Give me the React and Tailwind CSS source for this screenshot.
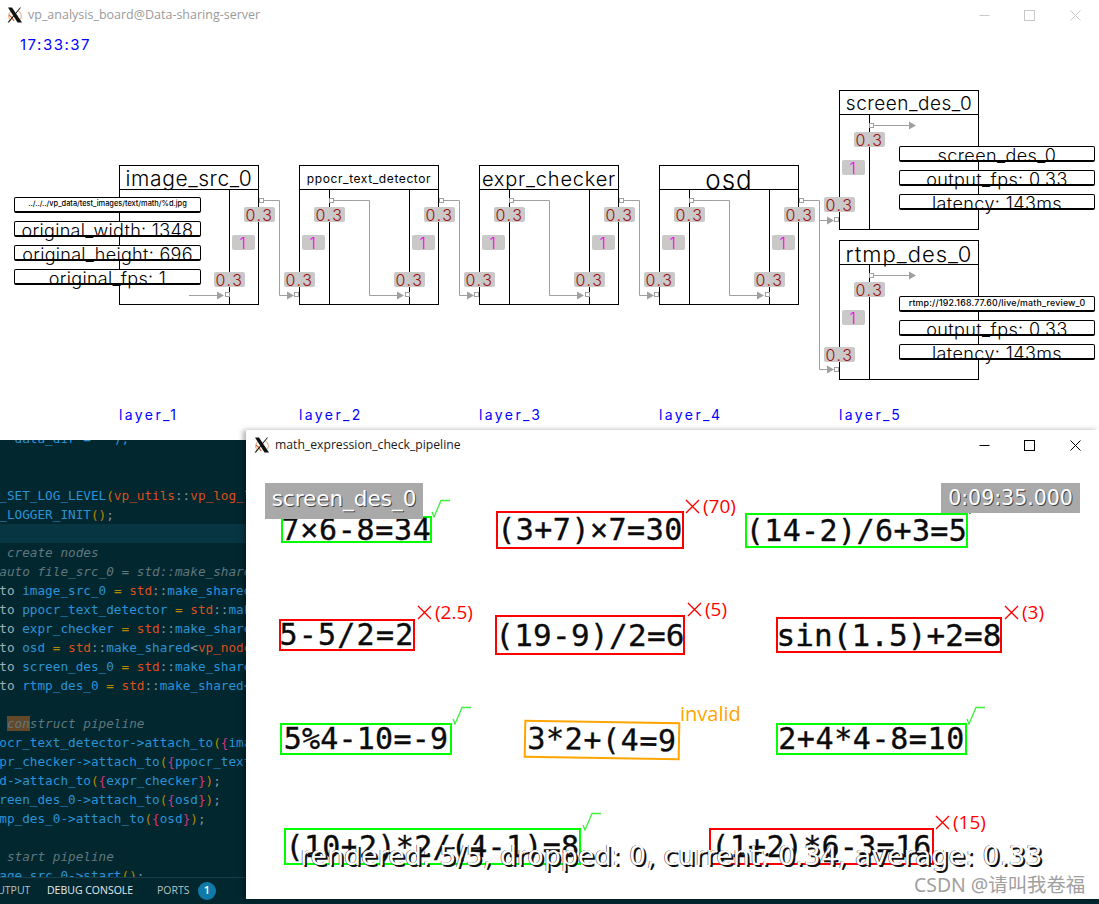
const hershey = "font-['Inter',sans-serif] font-light text-black whitespace-nowrap"
const mono = "font-['DejaVu_Sans_Mono',monospace]"
const dejavu = "font-['DejaVu_Sans',sans-serif]"
const ui = "font-['Open_Sans',sans-serif]"

function XLogo({ className }) {
  return (
    <svg className={className} viewBox="0 0 16 16" aria-hidden="true">
      <path d="M5 3.5 C1 6 0.5 11 4 13.5" fill="none" stroke="#e8a070" strokeWidth="1" />
      <path d="M11 3.5 C15 6 15.5 11 12 13.5" fill="none" stroke="#e8a070" strokeWidth="1" />
      <path d="M2 8 C5 10 6 11 7 14" fill="none" stroke="#e06020" strokeWidth="1.2" />
      <path d="M1 0.5 H5 L15 15.5 H10.5 Z" fill="#111" />
      <path d="M14 0.5 L2 15.5 H0.5 L13 0.5 Z" fill="#111" />
    </svg>
  )
}

function WindowControls({ className }) {
  return (
    <div className={`flex items-center ${className}`}>
      <svg className="w-[11px] h-[11px] mr-[34px]" viewBox="0 0 11 11" aria-hidden="true">
        <path d="M0.5 5.5 H10.5" stroke="currentColor" fill="none" />
      </svg>
      <svg className="w-[11px] h-[11px] mr-[35px]" viewBox="0 0 11 11" aria-hidden="true">
        <rect x="0.5" y="0.5" width="10" height="10" stroke="currentColor" fill="none" />
      </svg>
      <svg className="w-[11px] h-[11px]" viewBox="0 0 11 11" aria-hidden="true">
        <path d="M0.5 0.5 L10.5 10.5 M10.5 0.5 L0.5 10.5" stroke="currentColor" fill="none" />
      </svg>
    </div>
  )
}

function Chip({ className, value }) {
  const isRate = value === '1'
  return (
    <span
      className={`absolute h-[15px] flex items-center justify-center rounded-[2px] bg-[#cbc8c8] text-[16px] leading-none whitespace-nowrap font-['Inter',sans-serif] font-light tracking-[1.5px] ${
        isRate ? 'w-[23px] text-[#f000f0]' : 'w-[31px] text-[#9c1010]'
      } ${className}`}
    >
      {value}
    </span>
  )
}

function Port({ className }) {
  return <span className={`absolute w-[5px] h-[5px] border border-[#a0a0a0] bg-white ${className}`} />
}

// wires are drawn relative to the node's top-left corner
function Wires({ d, arrows }) {
  return (
    <svg className="absolute left-0 top-0 overflow-visible" width="140" height="140" aria-hidden="true">
      <path d={d} fill="none" stroke="#a0a0a0" />
      {arrows.map(([x, y]) => (
        <polygon key={`${x}-${y}`} points={`${x},${y - 4} ${x + 7},${y} ${x},${y + 4}`} fill="#a0a0a0" />
      ))}
    </svg>
  )
}

function InfoBoxes({ className, items }) {
  return (
    <div className={`absolute flex flex-col gap-2 ${className}`}>
      {items.map((item) => (
        <div
          key={item.text}
          className="h-4 rounded-[2px] border border-black border-b-2 bg-white flex items-end justify-center"
        >
          <span className={`${hershey} ${item.cls}`}>{item.text}</span>
        </div>
      ))}
    </div>
  )
}

function PipeNode({ className, title, titleCls, kind, wires, arrows, children }) {
  const hasLeft = kind !== 'src'
  const hasRight = kind !== 'des'
  return (
    <div className={`absolute w-[140px] h-[140px] ${className}`}>
      <div className="w-full h-full border border-black flex flex-col">
        <div className="h-[24px] pt-[3px] border-b border-black flex items-center justify-center shrink-0">
          <span className={`${hershey} ${titleCls}`}>{title}</span>
        </div>
        <div className="flex flex-1">
          {hasLeft && <div className="w-[30px] border-r border-black" />}
          <div className="flex-1" />
          {hasRight && <div className="w-[29px] border-l border-black" />}
        </div>
      </div>
      <Wires d={wires} arrows={arrows} />
      {hasLeft && (
        <>
          <Port className="left-[-5px] top-[127px]" />
          <Port className="left-[30px] top-[33px]" />
          <Chip className="left-[-15px] top-[107px]" value="0.3" />
          <Chip className="left-[3px] top-[70px]" value="1" />
          <Chip className="left-[15px] top-[42px]" value="0.3" />
        </>
      )}
      {hasRight && (
        <>
          <Port className="left-[106px] top-[127px]" />
          <Port className="left-[140px] top-[33px]" />
          <Chip className="left-[95px] top-[107px]" value="0.3" />
          <Chip className="left-[113px] top-[70px]" value="1" />
          <Chip className="left-[125px] top-[42px]" value="0.3" />
        </>
      )}
      {children}
    </div>
  )
}

const NEXT = 'M145 35.5 H160.5 V130.5 H168'
const THROUGH = 'M35 35.5 H70.5 V130.5 H99'

function BoardWindow() {
  return (
    <div className="h-[440px] bg-white flex flex-col">
      <div className="h-[30px] shrink-0 flex items-center pl-[7px] pr-[18px]">
        <XLogo className="w-4 h-4" />
        <span className={`ml-[5px] text-[12.5px] text-[#9a9a9a] ${ui}`}>vp_analysis_board@Data-sharing-server</span>
        <WindowControls className="ml-auto text-[#c8c8c8]" />
      </div>
      <div className="relative flex-1">
        <div className="pl-5 pt-[7px] text-[15px] leading-4 text-[#0000ff] tracking-[1.5px] font-['Inter',sans-serif] font-normal">
          17:33:37
        </div>

        <PipeNode
          className="left-[119px] top-[135px]"
          kind="src"
          title="image_src_0"
          titleCls="text-[21px] tracking-[0.6px]"
          wires={`M70 130.5 H99 ${NEXT}`}
          arrows={[[98, 130.5], [168, 130.5]]}
        >
          <InfoBoxes
            className="left-[-105px] top-[32px] w-[187px]"
            items={[
              { text: '../../../vp_data/test_images/text/math/%d.jpg', cls: 'text-[7.4px] font-medium mb-[2px]' },
              { text: 'original_width: 1348', cls: 'text-[18px] leading-[18px] tracking-[0.3px] -mb-[5px]' },
              { text: 'original_height: 696', cls: 'text-[18px] leading-[18px] tracking-[0.3px] -mb-[5px]' },
              { text: 'original_fps: 1', cls: 'text-[18px] leading-[18px] tracking-[0.3px] -mb-[5px]' },
            ]}
          />
        </PipeNode>
        <PipeNode
          className="left-[299px] top-[135px]"
          kind="mid"
          title="ppocr_text_detector"
          titleCls="text-[12px] font-normal tracking-[0.6px]"
          wires={`${THROUGH} ${NEXT}`}
          arrows={[[98, 130.5], [168, 130.5]]}
        />
        <PipeNode
          className="left-[479px] top-[135px]"
          kind="mid"
          title="expr_checker"
          titleCls="text-[20px] tracking-[0.8px]"
          wires={`${THROUGH} ${NEXT}`}
          arrows={[[98, 130.5], [168, 130.5]]}
        />
        <PipeNode
          className="left-[659px] top-[135px]"
          kind="mid"
          title="osd"
          titleCls="text-[26px] tracking-[1px]"
          wires={`${THROUGH} M145 35.5 H160.5 V204.5 H168 M160.5 55.5 H168`}
          arrows={[[98, 130.5], [168, 55.5], [168, 204.5]]}
        />
        <PipeNode
          className="left-[839px] top-[60px]"
          kind="des"
          title="screen_des_0"
          titleCls="text-[19px] tracking-[0.5px]"
          wires="M35 35.5 H70"
          arrows={[[70, 35.5]]}
        >
          <InfoBoxes
            className="left-[60px] top-[56px] w-[196px]"
            items={[
              { text: 'screen_des_0', cls: 'text-[18px] leading-[18px] tracking-[0.4px] -mb-[5px]' },
              { text: 'output_fps: 0.33', cls: 'text-[18px] leading-[18px] tracking-[0.4px] -mb-[5px]' },
              { text: 'latency: 143ms', cls: 'text-[18px] leading-[18px] tracking-[0.4px] -mb-[5px]' },
            ]}
          />
        </PipeNode>
        <PipeNode
          className="left-[839px] top-[210px]"
          kind="des"
          title="rtmp_des_0"
          titleCls="text-[22px] tracking-[1px]"
          wires="M35 35.5 H70"
          arrows={[[70, 35.5]]}
        >
          <InfoBoxes
            className="left-[60px] top-[56px] w-[196px]"
            items={[
              { text: 'rtmp://192.168.77.60/live/math_review_0', cls: 'text-[8.8px] font-medium tracking-[0.2px] mb-[1px]' },
              { text: 'output_fps: 0.33', cls: 'text-[18px] leading-[18px] tracking-[0.4px] -mb-[5px]' },
              { text: 'latency: 143ms', cls: 'text-[18px] leading-[18px] tracking-[0.4px] -mb-[5px]' },
            ]}
          />
        </PipeNode>

        <div className="absolute left-[119px] top-[377px] flex text-[14px] leading-4 text-[#0000ff] tracking-[2.4px] font-['Inter',sans-serif] font-normal">
          {['layer_1', 'layer_2', 'layer_3', 'layer_4', 'layer_5'].map((name) => (
            <span key={name} className="w-[180px]">{name}</span>
          ))}
        </div>
      </div>
    </div>
  )
}

const C = {
  b: 'text-[#2a93d6]',
  t: 'text-[#9db0b5]',
  y: 'text-[#b58900]',
  o: 'text-[#dc4f1e]',
  m: 'text-[#d33682]',
  g: 'text-[#5f777e] italic',
  p: 'text-[#7f9aa3]',
}

// col 0 sits 16px left of the visible edge, the editor is scrolled sideways
const CODE = [
  [['    data_dir = "");', 'b']],
  [],
  [],
  [['VP_SET_LOG_LEVEL', 'b'], ['(', 'y'], ['vp_utils', 'o'], ['::', 'p'], ['vp_log_level', 'o']],
  [['VP_LOGGER_INIT', 'b'], ['()', 'y'], [';', 'p']],
  [],
  [['// create nodes', 'g']],
  [['//auto file_src_0 = std::make_shared<vp_nodes', 'g']],
  [['auto', 't'], [' image_src_0 ', 'b'], ['=', 'y'], [' ', 'b'], ['std', 'o'], ['::', 'p'], ['make_shared<vp_nodes', 'b']],
  [['auto', 't'], [' ppocr_text_detector ', 'b'], ['=', 'y'], [' ', 'b'], ['std', 'o'], ['::', 'p'], ['make_shared<vp_nodes', 'b']],
  [['auto', 't'], [' expr_checker ', 'b'], ['=', 'y'], [' ', 'b'], ['std', 'o'], ['::', 'p'], ['make_shared<vp_nodes', 'b']],
  [['auto', 't'], [' osd ', 'b'], ['=', 'y'], [' ', 'b'], ['std', 'o'], ['::', 'p'], ['make_shared', 'b'], ['<', 'p'], ['vp_nodes', 'o']],
  [['auto', 't'], [' screen_des_0 ', 'b'], ['=', 'y'], [' ', 'b'], ['std', 'o'], ['::', 'p'], ['make_shared<vp_nodes', 'b']],
  [['auto', 't'], [' rtmp_des_0 ', 'b'], ['=', 'y'], [' ', 'b'], ['std', 'o'], ['::', 'p'], ['make_shared<vp_nodes', 'b']],
  [],
  'construct',
  [['ppocr_text_detector->attach_to', 'b'], ['(', 'y'], ['{', 'm'], ['image_src_0', 'b']],
  [['expr_checker->attach_to', 'b'], ['(', 'y'], ['{', 'm'], ['ppocr_text_detector', 'b']],
  [['osd->attach_to', 'b'], ['(', 'y'], ['{', 'm'], ['expr_checker', 'b'], ['}', 'm'], [')', 'y'], [';', 'p']],
  [['screen_des_0->attach_to', 'b'], ['(', 'y'], ['{', 'm'], ['osd', 'b'], ['}', 'm'], [')', 'y'], [';', 'p']],
  [['rtmp_des_0->attach_to', 'b'], ['(', 'y'], ['{', 'm'], ['osd', 'b'], ['}', 'm'], [')', 'y'], [';', 'p']],
  [],
  [['// start pipeline', 'g']],
  [['image_src_0->start', 'b'], ['()', 'y'], [';', 'p']],
]

function CodeEditor() {
  return (
    <div className={`h-[464px] bg-[#02272f] flex flex-col overflow-hidden ${mono}`}>
      <div className="flex-1 min-h-0 overflow-hidden">
        <div className="-mt-[11px] -ml-[16px] text-[12.7px] leading-[19px] whitespace-pre">
          {CODE.map((line, i) => {
            if (line === 'construct') {
              return (
                <div key={i} className="h-[19px] italic text-[#5f777e]">
                  {'// '}
                  <span className="bg-[#64482a]">con</span>
                  struct pipeline
                </div>
              )
            }
            return (
              <div key={i} className={`h-[19px] ${i === 5 ? 'bg-[#073642]' : ''}`}>
                {line.map(([text, tone], j) => (
                  <span key={j} className={C[tone]}>{text}</span>
                ))}
              </div>
            )
          })}
        </div>
      </div>
      <div className={`h-[27px] shrink-0 border-t border-[#173f4a] flex items-center pb-[1px] text-[10.5px] text-[#b4c2c6] whitespace-nowrap ${ui}`}>
        <span className="-ml-[11px] w-[58px]">OUTPUT</span>
        <span className="w-[110px] text-[#e4ecee]">DEBUG CONSOLE</span>
        <span className="w-[41px]">PORTS</span>
        <span className="w-[18px] h-[18px] rounded-full bg-[#0f7aa8] text-white flex items-center justify-center text-[11px] font-semibold">1</span>
      </div>
    </div>
  )
}

const EXPRS = [
  { text: '7×6-8=34', box: 'left-[35px] top-[86px] w-[151px] h-[27px]', tone: 'border-[#00ff00]', cls: 'text-[30px] tracking-[0.7px]' },
  { text: '(3+7)×7=30', box: 'left-[250px] top-[81px] w-[188px] h-[38px]', tone: 'border-[#ff0000]', cls: 'text-[30px] tracking-[0.5px]' },
  { text: '(14-2)/6+3=5', box: 'left-[499px] top-[83px] w-[223px] h-[35px]', tone: 'border-[#00ff00]', cls: 'text-[30px] tracking-[0.4px]' },
  { text: '5-5/2=2', box: 'left-[33px] top-[189px] w-[136px] h-[32px]', tone: 'border-[#ff0000]', cls: 'text-[30px] tracking-[1.2px]' },
  { text: '(19-9)/2=6', box: 'left-[249px] top-[185px] w-[190px] h-[40px]', tone: 'border-[#ff0000]', cls: 'text-[31px] tracking-[0.3px]' },
  { text: 'sin(1.5)+2=8', box: 'left-[530px] top-[187px] w-[226px] h-[36px]', tone: 'border-[#ff0000]', cls: 'text-[31px] tracking-[0.1px]' },
  { text: '5%4-10=-9', box: 'left-[34px] top-[293px] w-[172px] h-[32px]', tone: 'border-[#00ff00]', cls: 'text-[30px] tracking-[0.2px]' },
  { text: '3*2+(4=9', box: 'left-[278px] top-[291px] w-[156px] h-[38px] rotate-[1deg]', tone: 'border-[#ffa500]', cls: 'text-[30px] tracking-[0.6px]' },
  { text: '2+4*4-8=10', box: 'left-[530px] top-[293px] w-[191px] h-[32px]', tone: 'border-[#00ff00]', cls: 'text-[30px] tracking-[0.6px]' },
  { text: '(10+2)*2/(4-1)=8', box: 'left-[38px] top-[398px] w-[297px] h-[37px]', tone: 'border-[#00ff00]', cls: 'text-[30px] tracking-[0.3px]' },
  { text: '(1+2)*6-3=16', box: 'left-[463px] top-[398px] w-[225px] h-[37px]', tone: 'border-[#ff0000]', cls: 'text-[30px] tracking-[0.3px]' },
]

const WRONG = [
  { text: '(70)', cls: 'left-[439px] top-[63px]' },
  { text: '(2.5)', cls: 'left-[171px] top-[169px]' },
  { text: '(5)', cls: 'left-[441px] top-[166px]' },
  { text: '(3)', cls: 'left-[758px] top-[169px]' },
  { text: '(15)', cls: 'left-[689px] top-[379px]' },
]

const CHECKS = ['left-[185px] top-[69px]', 'left-[720px] top-[276px]', 'left-[206px] top-[276px]', 'left-[336px] top-[382px]']

function CheckMark({ className }) {
  return (
    <svg className={`absolute w-[20px] h-[19px] ${className}`} viewBox="0 0 20 19" fill="none" aria-hidden="true">
      <path d="M1 13 L3 18 L10 1.5 H19" stroke="#3cf03c" strokeWidth="1.3" />
    </svg>
  )
}

function MathWindow() {
  return (
    <div className="absolute left-[246px] top-[430px] w-[853px] h-[469px] bg-white flex flex-col shadow-[-3px_0_5px_rgba(0,0,0,0.3)]">
      <div className="h-[30px] shrink-0 flex items-center pl-[8px] pr-[18px]">
        <XLogo className="w-4 h-4" />
        <span className={`ml-[5px] text-[12.2px] text-[#1a1a1a] ${ui}`}>math_expression_check_pipeline</span>
        <WindowControls className="ml-auto text-black" />
      </div>
      <div className="relative flex-1 -mt-[30px]">
        {CHECKS.map((cls) => (
          <CheckMark key={cls} className={cls} />
        ))}
        <svg className="absolute left-[721px] top-[64px] w-[15px] h-[20px]" viewBox="0 0 15 20" fill="none" aria-hidden="true">
          <path d="M1 16 L3 20 L9 4 H15" stroke="#12a812" />
        </svg>

        {EXPRS.map((e) => (
          <div key={e.text} className={`absolute border-2 flex items-center justify-center overflow-visible ${e.tone} ${e.box}`}>
            <span className={`${mono} text-[#0b0b0b] leading-none whitespace-nowrap [-webkit-text-stroke:0.35px_#0b0b0b] ${e.cls}`}>{e.text}</span>
          </div>
        ))}

        {WRONG.map((w) => (
          <div key={w.text} className={`absolute flex items-center gap-[3px] text-[#ff0000] text-[19px] leading-[26px] font-medium ${ui} ${w.cls}`}>
            <svg className="w-[15px] h-[15px]" viewBox="0 0 15 15" aria-hidden="true">
              <path d="M1 1 L14 14 M14 1 L1 14" stroke="#ff0000" strokeWidth="1.4" fill="none" />
            </svg>
            <span>{w.text}</span>
          </div>
        ))}
        <span className={`absolute left-[434px] top-[271px] text-[#ffa500] text-[20px] leading-[26px] font-medium ${ui}`}>invalid</span>

        <div className={`absolute left-[19px] top-[53px] w-[158px] h-[36px] pb-[4px] bg-[#a9a9a9] text-white text-[21.5px] flex items-center justify-center [text-shadow:1px_1px_0_#444] ${dejavu}`}>
          screen_des_0
        </div>
        <div className={`absolute left-[695px] top-[53px] w-[139px] h-[30px] bg-[#a9a9a9] text-white text-[20.5px] flex items-center justify-center [text-shadow:1px_1px_0_#444] ${dejavu}`}>
          0:09:35.000
        </div>

        <div className={`absolute left-[54px] top-[411px] whitespace-nowrap text-white text-[26.9px] leading-[30px] [text-shadow:2px_2px_0_#111,-0.5px_-0.5px_0_#333] ${dejavu}`}>
          rendered: 5/5, dropped: 0, current: 0.34, average: 0.33
        </div>
        <div className="absolute left-[668px] top-[443px] whitespace-nowrap text-[#a0a0a0] text-[19.4px] leading-6 font-['Noto_Sans','Noto_Sans_CJK_SC',sans-serif]">
          CSDN @请叫我卷福
        </div>
      </div>
    </div>
  )
}

export default function App() {
  return (
    <div className="relative w-[1099px] h-[904px] overflow-hidden bg-white">
      <BoardWindow />
      <CodeEditor />
      <MathWindow />
    </div>
  )
}
